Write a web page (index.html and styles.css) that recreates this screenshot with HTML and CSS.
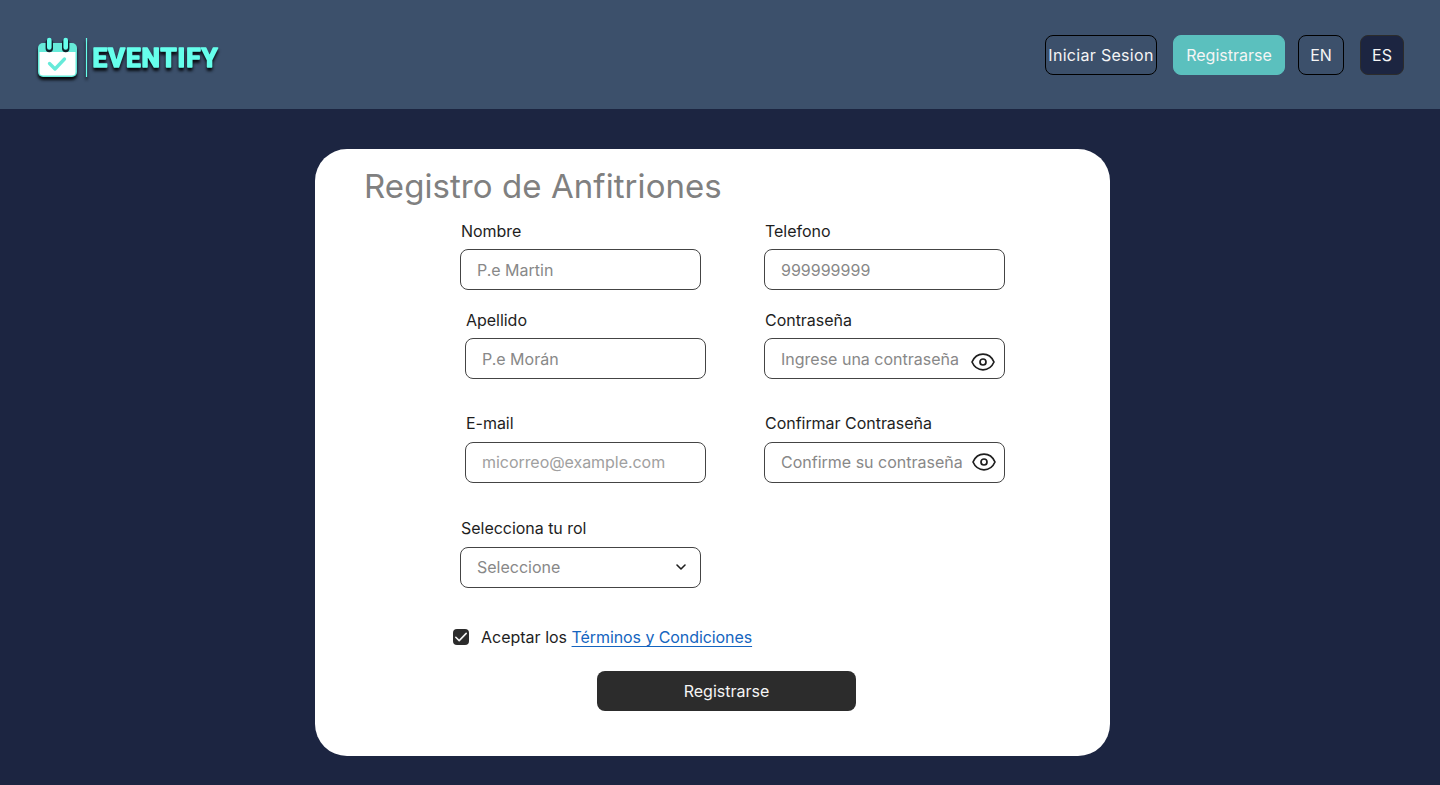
FILE: index.html
```html
<!DOCTYPE html>
<html lang="es">
<head>
<meta charset="utf-8">
<title>Eventify - Registro de Anfitriones</title>
<link rel="stylesheet" href="styles.css">
</head>
<body>
<header class="topbar">
  <a class="logo" aria-label="Eventify">
    <svg width="200" height="60" viewBox="0 0 200 60">
      <g class="logo-shadow">
        <rect x="8" y="13" width="39" height="34" rx="5" fill="#66ead9"/>
        <path d="M9.500 22H45.500V42Q45.500 45.500 42 45.500H13Q9.500 45.500 9.500 42Z" fill="#fff"/>
        <path d="M19.300 13V18.500M35.700 13V18.500" stroke="#10222c" stroke-width="7.400" stroke-linecap="round"/>
        <path d="M19.300 10V17.500M35.700 10V17.500" stroke="#66ffec" stroke-width="4.600" stroke-linecap="round"/>
        <path d="M19.500 33.500L25 39L34.500 29" fill="none" stroke="#66ead9" stroke-width="3.300" stroke-linecap="round" stroke-linejoin="round"/>
        <path d="M56.500 8V47" stroke="#66ffec" stroke-width="1.200"/>
        <text class="logo-name" x="62.500" y="36.500" textLength="125" lengthAdjust="spacing">EVENTIFY</text>
      </g>
    </svg>
  </a>
  <nav class="actions">
    <button class="btn outline login">Iniciar Sesion</button>
    <button class="btn teal">Registrarse</button>
    <button class="btn outline lang-en">EN</button>
    <button class="btn navy">ES</button>
  </nav>
</header>
<main class="card">
  <h1 class="title">Registro de Anfitriones</h1>
  <form class="form">
    <div class="fields">
      <div class="column">
        <label class="field name"><span class="label">Nombre</span><span class="control"><input class="input" placeholder="P.e Martin"></span></label>
        <label class="field surname shifted"><span class="label">Apellido</span><span class="control"><input class="input" placeholder="P.e Morán"></span></label>
        <label class="field mail shifted"><span class="label">E-mail</span><span class="control"><input class="input raised light" placeholder="micorreo@example.com"></span></label>
        <label class="field"><span class="label">Selecciona tu rol</span><span class="control"><input class="input raised" placeholder="Seleccione" readonly>
          <svg class="chevron" width="16" height="16" viewBox="0 0 16 16"><path d="M4 6L8 10L12 6"/></svg></span></label>
      </div>
      <div class="column">
        <label class="field name"><span class="label">Telefono</span><span class="control"><input class="input" placeholder="999999999"></span></label>
        <label class="field surname"><span class="label">Contraseña</span><span class="control"><input class="input" placeholder="Ingrese una contraseña">
          <svg class="eye" width="24" height="18" viewBox="0 0 24 18"><path d="M1 9C3 4.500 7 1.200 12 1.200S21 4.500 23 9C21 13.500 17 16.800 12 16.800S3 13.500 1 9Z"/><circle cx="12" cy="9" r="3"/></svg></span></label>
        <label class="field mail"><span class="label">Confirmar Contraseña</span><span class="control"><input class="input raised" placeholder="Confirme su contraseña">
          <svg class="eye upper" width="24" height="18" viewBox="0 0 24 18"><path d="M1 9C3 4.500 7 1.200 12 1.200S21 4.500 23 9C21 13.500 17 16.800 12 16.800S3 13.500 1 9Z"/><circle cx="12" cy="9" r="3"/></svg></span></label>
      </div>
    </div>
    <div class="terms">
      <svg width="16" height="16" viewBox="0 0 16 16"><rect width="16" height="16" rx="4" fill="#2c2c2c"/><path d="M2.800 8.300L6.200 11.600L13.200 4.400" fill="none" stroke="#f5f5f5" stroke-width="1.600" stroke-linecap="round" stroke-linejoin="round"/></svg>
      <span>Aceptar los <a class="link">Términos y Condiciones</a></span>
    </div>
    <button class="submit" type="button">Registrarse</button>
  </form>
</main>
</body>
</html>
```

FILE: styles.css
```css
* { box-sizing: border-box; }
body {
  margin: 0;
  height: 785px;
  overflow: hidden;
  background: #1c2541;
  font-family: Inter, sans-serif;
  font-size: 16px;
  color: #1e1e1e;
}
button, input { font: inherit; }
.topbar {
  display: flex;
  justify-content: space-between;
  height: 109px;
  padding: 30px 36px 0 30px;
  background: #3c506b;
}
.logo { height: 60px; }
.logo-shadow { filter: drop-shadow(0.500px 3.500px 1.600px #05080c); }
.logo-name {
  font: 700 26px Roboto, sans-serif;
  fill: #66ffec;
  stroke: #66ffec;
  stroke-width: 1.600px;
  stroke-linejoin: round;
}
.actions { display: flex; padding-top: 5px; }
.btn {
  height: 40px;
  padding: 0;
  border: 1px solid #000;
  border-radius: 8px;
  background: none;
  color: #f5f5f5;
  font-weight: 380;
  white-space: nowrap;
}
.login { width: 112px; margin-right: 16px; letter-spacing: 0.300px; }
.teal { width: 112px; margin-right: 13px; border-color: #5bc0be; background: #5bc0be; }
.lang-en { width: 46px; margin-right: 16px; }
.navy { width: 44px; border-color: #2c2c2c; background: #1c2541; }
.card {
  width: 795px;
  height: 607px;
  margin: 40px 0 0 315px;
  padding: 15px 0 0 49px;
  border-radius: 32px;
  background: #fff;
}
.title {
  margin: 0;
  font-weight: 400;
  font-size: 33px;
  line-height: 44px;
  letter-spacing: 0.070px;
  color: #808080;
}
.form { padding: 12px 0 0 96px; }
.fields { display: flex; gap: 63px; height: 367px; }
.column { width: 241px; }
.field { display: block; width: 241px; line-height: 22px; }
.label { display: block; padding-left: 1px; letter-spacing: -0.030px; }
.name { margin-bottom: 19px; }
.surname { margin-bottom: 33px; }
.mail { margin-bottom: 34px; }
.shifted { margin-left: 5px; }
.mail .control, .mail + .field .control { margin-top: 8px; }
.control { display: block; position: relative; height: 41px; margin-top: 7px; }
.input {
  display: block;
  width: 241px;
  height: 41px;
  padding: 0 16px;
  border: 1px solid #444;
  border-radius: 8px;
  background: #fff;
  outline: 0;
}
.raised { padding-bottom: 2px; }
.input::placeholder { color: #888; opacity: 1; font-weight: 380; }
.light::placeholder { color: #a0a0a0; letter-spacing: -0.050px; }
.chevron, .eye { position: absolute; fill: none; stroke: #1e1e1e; }
.chevron { right: 12px; top: 12px; stroke-width: 1.600; stroke-linecap: round; stroke-linejoin: round; }
.eye { right: 10.500px; top: 15px; stroke-width: 1.700; stroke-linejoin: round; }
.upper { right: 9.500px; top: 10.500px; }
.terms { display: flex; align-items: center; gap: 12px; height: 22px; margin: 39px 0 0 -7px; }
.link {
  color: #1565c0;
  letter-spacing: -0.080px;
  text-decoration: underline 1px #1565c0;
  text-decoration-skip-ink: none;
  text-underline-offset: 3px;
}
.submit {
  display: block;
  width: 259px;
  height: 40px;
  margin: 23px 0 0 137px;
  padding: 0;
  border: 0;
  border-radius: 8px;
  background: #2c2c2c;
  color: #f5f5f5;
  font-weight: 380;
}
```
